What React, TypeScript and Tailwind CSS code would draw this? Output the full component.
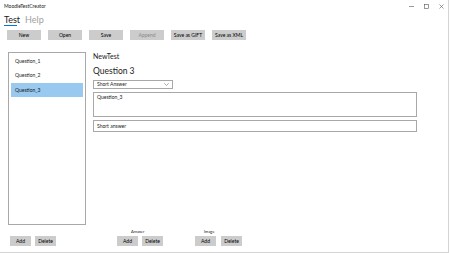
import React from "react";

const Btn = ({ label, w = "w-[34px]", disabled = false }: { label: string; w?: string; disabled?: boolean }) => (
  <div
    className={`${w} h-[10px] bg-[#cccccc] flex items-center justify-center text-[5px] leading-none ${disabled ? "text-[#8a8a8a]" : "text-black"}`}
  >
    {label}
  </div>
);

const SmallBtn = ({ label }: { label: string }) => (
  <div className="w-[21px] h-[10px] bg-[#cccccc] flex items-center justify-center text-[5px] leading-none text-black">
    {label}
  </div>
);

export default function App() {
  return (
    <div className="w-[450px] h-[253px] bg-white relative overflow-hidden font-['Lato',sans-serif] text-[#1a1a1a]">
      <div className="w-[448px] h-[252px] border-r border-b border-[#d4d4d4] box-content flex flex-col">
        {/* Title bar */}
        <div className="h-[12px] flex items-center pl-[4px] pr-[4px] text-[5px] leading-none">
          <span>MoodleTestCreator</span>
          <div className="ml-auto flex items-center gap-[10px] text-[#333]">
            <svg width="5" height="5" viewBox="0 0 5 5"><line x1="0" y1="2.5" x2="5" y2="2.5" stroke="#555" strokeWidth="0.6" /></svg>
            <svg width="5" height="5" viewBox="0 0 5 5"><rect x="0.5" y="0.5" width="4" height="4" fill="none" stroke="#555" strokeWidth="0.6" /></svg>
            <svg width="5" height="5" viewBox="0 0 5 5"><path d="M0.5 0.5 L4.5 4.5 M4.5 0.5 L0.5 4.5" stroke="#555" strokeWidth="0.6" /></svg>
          </div>
        </div>
        {/* Tabs */}
        <div className="h-[16px] flex items-start pl-[4px] gap-[5px] text-[9px] leading-none pt-[3px]">
          <div className="flex flex-col items-start">
            <span>Test</span>
            <div className="mt-[1px] h-[1px] w-[13px] bg-[#0078d7]" />
          </div>
          <span className="text-[#a0a0a0]">Help</span>
        </div>
        {/* Toolbar */}
        <div className="mt-[2px] flex pl-[7px] gap-[7px]">
          <Btn label="New" />
          <Btn label="Open" />
          <Btn label="Save" />
          <Btn label="Append" disabled />
          <Btn label="Save as GIFT" />
          <Btn label="Save as XML" />
        </div>
        {/* Main */}
        <div className="mt-[12px] flex">
          <div className="ml-[8px] w-[78px] h-[173px] border border-[#a8a8a8] pt-[1px] px-[2px] flex flex-col text-[5px] leading-none">
            <div className="h-[14px] flex items-center pl-[4px]">Question_1</div>
            <div className="h-[15px] flex items-center pl-[4px]">Question_2</div>
            <div className="h-[14px] flex items-center pl-[4px] bg-[#99c9ef]">Question_3</div>
          </div>
          <div className="ml-[7px] w-[324px] flex flex-col">
            <div className="h-[9px] flex items-center text-[7px] leading-none">NewTest</div>
            <div className="mt-[5px] h-[10px] flex items-center text-[8.5px] leading-none">Question 3</div>
            <div className="mt-[4px] w-[80px] h-[9px] border border-[#a8a8a8] flex items-center pl-[3px] pr-[3px] text-[5px] leading-none">
              <span>Short Answer</span>
              <svg className="ml-auto" width="5" height="3" viewBox="0 0 5 3"><path d="M0.3 0.3 L2.5 2.5 L4.7 0.3" fill="none" stroke="#555" strokeWidth="0.5" /></svg>
            </div>
            <div className="mt-[3px] h-[25px] border border-[#a8a8a8] pl-[3px] pt-[2px] text-[5px] leading-none">Question_3</div>
            <div className="mt-[3px] h-[12px] border border-[#a8a8a8] pl-[3px] flex items-center text-[5px] leading-none">Short answer</div>
          </div>
        </div>
        {/* Bottom */}
        <div className="mt-[3px] flex items-end">
          <div className="ml-[10px] flex gap-[4px]">
            <SmallBtn label="Add" />
            <SmallBtn label="Delete" />
          </div>
          <div className="ml-[61px] flex flex-col">
            <div className="pl-[14px] h-[8px] flex items-center text-[4px] leading-none">Answer</div>
            <div className="flex gap-[4px]">
              <SmallBtn label="Add" />
              <SmallBtn label="Delete" />
            </div>
          </div>
          <div className="ml-[32px] flex flex-col">
            <div className="pl-[9px] h-[8px] flex items-center text-[4px] leading-none">Image</div>
            <div className="flex gap-[5px]">
              <SmallBtn label="Add" />
              <SmallBtn label="Delete" />
            </div>
          </div>
        </div>
      </div>
    </div>
  );
}
